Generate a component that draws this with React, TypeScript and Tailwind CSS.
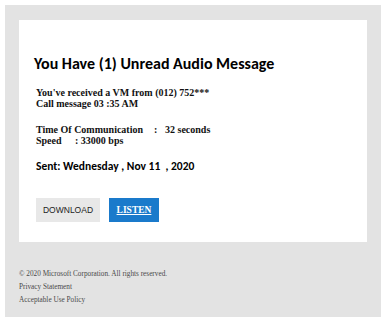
import React from "react";

export default function App() {
  const serif = { fontFamily: '"Liberation Serif", "Times New Roman", serif' };
  const sans = { fontFamily: 'Carlito, Lato, "Open Sans", sans-serif' };
  return (
    <div className="w-[385px] h-[320px] bg-white p-[5px] pr-[4px] pb-[3px]">
      <div className="h-full bg-[#e3e3e3] pt-[15px] px-[14px]">
        <div className="bg-white pl-[15px] pt-[34px] pb-[20px]">
          <h1 className="text-[16px] leading-[20px] font-bold text-black" style={sans}>
            You Have (1) Unread Audio Message
          </h1>
          <div className="mt-[13px] ml-[2px] text-[10px] leading-[11px] font-bold text-[#111]" style={serif}>
            <div>You've received a VM from (012) 752***</div>
            <div>Call message 03 :35 AM</div>
          </div>
          <div className="mt-[15px] ml-[2px] text-[10px] leading-[11px] font-bold text-[#111]" style={serif}>
            <div className="flex">
              <span className="w-[118px]">Time Of Communication</span>
              <span className="w-[11px]">:</span>
              <span>32 seconds</span>
            </div>
            <div className="flex">
              <span className="w-[39px]">Speed</span>
              <span>: 33000 bps</span>
            </div>
          </div>
          <div
            className="mt-[12px] ml-[2px] text-[11.5px] leading-[16px] font-bold text-black whitespace-pre"
            style={sans}
          >
            {"Sent: Wednesday , Nov 11  , 2020"}
          </div>
          <div className="mt-[24px] ml-[2px] flex gap-[9px]">
            <div
              className="w-[64px] h-[24px] bg-[#e8e8e8] flex items-center justify-center text-[8.5px] text-[#222]"
              style={{ fontFamily: '"Liberation Sans", Arial, sans-serif' }}
            >
              DOWNLOAD
            </div>
            <div
              className="w-[50px] h-[24px] bg-[#1a7acb] flex items-center justify-center text-[9.5px] font-bold text-white underline"
              style={serif}
            >
              LISTEN
            </div>
          </div>
        </div>
        <div className="pt-[26px] text-[7.25px] leading-[13px] text-[#4a4a4a]" style={serif}>
          <div>© 2020 Microsoft Corporation. All rights reserved.</div>
          <div>Privacy Statement</div>
          <div>Acceptable Use Policy</div>
        </div>
      </div>
    </div>
  );
}
